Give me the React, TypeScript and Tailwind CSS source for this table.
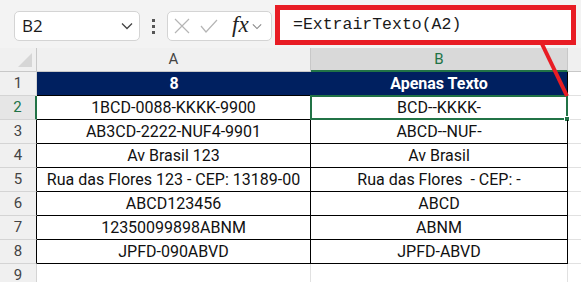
import React from 'react';

const rows: [string, string][] = [
  ['1BCD-0088-KKKK-9900', 'BCD--KKKK-'],
  ['AB3CD-2222-NUF4-9901', 'ABCD--NUF-'],
  ['Av Brasil 123', 'Av Brasil'],
  ['Rua das Flores 123 - CEP: 13189-00', 'Rua das Flores  - CEP: -'],
  ['ABCD123456', 'ABCD'],
  ['12350099898ABNM', 'ABNM'],
  ['JPFD-090ABVD', 'JPFD-ABVD'],
];

const cellFont = { fontFamily: 'Roboto, "Liberation Sans", sans-serif' };

const Chevron = ({ className }: { className?: string }) => (
  <svg viewBox="0 0 12 8" className={className} fill="none" stroke="currentColor" strokeWidth="1.3">
    <path d="M1 1.5 L6 6.5 L11 1.5" />
  </svg>
);

const App: React.FC = () => {
  return (
    <div className="relative w-[581px] h-[282px] overflow-hidden bg-white" style={cellFont}>
      {/* Formula bar */}
      <div className="flex h-[48px] bg-[#f3f3f3] items-start">
        <div className="ml-[14px] mt-[11px] w-[126px] h-[30px] bg-white border border-[#d4d4d4] rounded-[5px] flex items-center pl-[7px] pr-[6px]">
          <span className="text-[17px] text-[#1a1a1a] flex-1" style={{ fontFamily: '"Open Sans", "Noto Sans", sans-serif' }}>B2</span>
          <Chevron className="w-[12px] h-[8px] text-[#444]" />
        </div>
        <div className="w-[27px] mt-[19px] flex flex-col items-center gap-[3px]">
          <span className="w-[3px] h-[3px] bg-[#555]" />
          <span className="w-[3px] h-[3px] bg-[#555]" />
          <span className="w-[3px] h-[3px] bg-[#555]" />
        </div>
        <div className="mt-[11px] w-[105px] h-[30px] bg-white border border-[#d4d4d4] rounded-[5px] flex items-center pl-[6px]">
          <svg viewBox="0 0 16 16" className="w-[16px] h-[16px] text-[#b5b5b5]" fill="none" stroke="currentColor" strokeWidth="1.2">
            <path d="M1 1 L15 15 M15 1 L1 15" />
          </svg>
          <svg viewBox="0 0 18 14" className="ml-[10px] w-[18px] h-[14px] text-[#b5b5b5]" fill="none" stroke="currentColor" strokeWidth="1.2">
            <path d="M1 7 L6 13 L17 1" />
          </svg>
          <span className="ml-[14px] text-[23px] leading-none italic text-[#222] -mt-[3px]" style={{ fontFamily: '"Liberation Serif", serif' }}>
            fx
          </span>
          <Chevron className="ml-[3px] w-[10px] h-[7px] text-[#888]" />
        </div>
        <div className="ml-[3px] mt-[5px] w-[301px] h-[40px] border-[5px] border-[#e81c24] bg-white flex items-center pl-[13px]">
          <span className="text-[16.5px] text-[#1a1a1a]" style={{ fontFamily: '"Liberation Mono", monospace' }}>
            =ExtrairTexto(A2)
          </span>
        </div>
      </div>

      {/* Column headers */}
      <div className="flex h-[24px] bg-[#f0f0f0] text-[15px] text-[#444]">
        <div className="w-[37px] relative border-r border-b border-[#c8c8c8]">
          <div className="absolute right-[4px] bottom-[4px] w-0 h-0 border-l-[14px] border-l-transparent border-b-[14px] border-b-[#d6d6d6]" />
        </div>
        <div className="w-[274px] flex items-center justify-center border-r border-b border-[#c8c8c8]">A</div>
        <div className="w-[257px] flex items-center justify-center bg-[#d9d9d9] text-[#217346] border-r border-[#c8c8c8] border-b-2 border-b-[#217346]">B</div>
        <div className="flex-1 border-b border-[#c8c8c8]" />
      </div>

      {/* Header row 1 */}
      <div className="flex h-[24px]">
        <div className="w-[37px] bg-[#f0f0f0] text-[15px] text-[#444] flex items-center justify-center border-r border-b border-[#d4d4d4]">1</div>
        <div className="w-[531px] flex bg-[#002060] text-white font-bold text-[16px] border-b border-black">
          <div className="w-[274px] flex items-center justify-center">8</div>
          <div className="flex-1 flex items-center justify-center border-r border-black">Apenas Texto</div>
        </div>
        <div className="flex-1 border-b border-[#e1e1e1]" />
      </div>

      {/* Data rows */}
      {rows.map(([a, b], i) => {
        const selected = i === 0;
        return (
          <div key={i} className="flex h-[24px] text-[16px] text-[#111] whitespace-pre">
            <div
              className={`w-[37px] flex items-center justify-center text-[15px] border-b border-[#d4d4d4] ${
                selected ? 'bg-[#e6e6e6] text-[#217346] border-r-2 border-r-[#217346]' : 'bg-[#f0f0f0] text-[#444] border-r border-r-black'
              }`}
            >
              {i + 2}
            </div>
            <div className="w-[274px] flex items-center justify-center border-r border-b border-black">{a}</div>
            <div className="w-[257px] relative flex items-center justify-center border-r border-b border-black">
              {b}
              {selected && (
                <div className="absolute -left-[1px] -top-[1px] -right-[1px] -bottom-[1px] border-2 border-[#217346]">
                  <div className="absolute -right-[4px] -bottom-[4px] w-[6px] h-[6px] bg-[#217346] border border-white" />
                </div>
              )}
            </div>
            <div className="flex-1 border-b border-[#e1e1e1]" />
          </div>
        );
      })}

      {/* Row 9 */}
      <div className="flex h-[24px]">
        <div className="w-[37px] bg-[#f0f0f0] text-[15px] text-[#444] flex items-center justify-center border-r border-b border-[#d4d4d4]">9</div>
        <div className="w-[274px] border-r border-b border-[#e1e1e1]" />
        <div className="w-[257px] border-r border-b border-[#e1e1e1]" />
        <div className="flex-1 border-b border-[#e1e1e1]" />
      </div>

      {/* Callout line */}
      <svg className="absolute left-0 top-0 pointer-events-none" width="581" height="282">
        <line x1="542" y1="44" x2="567" y2="96" stroke="#e81c24" strokeWidth="4" />
      </svg>
    </div>
  );
};

export default App;
